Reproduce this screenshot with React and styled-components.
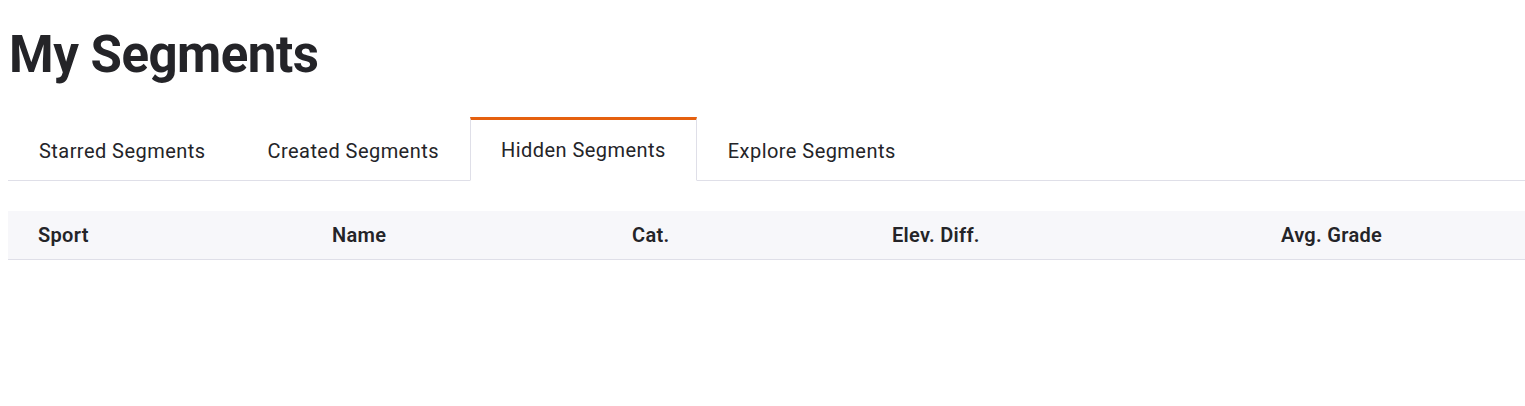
import React from "react"
import styled, { createGlobalStyle } from "styled-components"

const GlobalStyle = createGlobalStyle`
  body {
    margin: 0;
    background: #fff;
    font-family: Roboto, "Liberation Sans", sans-serif;
    color: #242428;
  }
`

const tabs = ["Starred Segments", "Created Segments", "Hidden Segments", "Explore Segments"]
const columns = [
  { label: "Sport", width: 294 },
  { label: "Name", width: 300 },
  { label: "Cat.", width: 260 },
  { label: "Elev. Diff.", width: 389 },
  { label: "Avg. Grade", width: 274 },
]

export default function App() {
  return (
    <Page>
      <GlobalStyle />
      <Title>My Segments</Title>
      <TabBar>
        {tabs.map((t) => (
          <Tab key={t} $active={t === "Hidden Segments"}>
            {t}
          </Tab>
        ))}
      </TabBar>
      <Table>
        <thead>
          <tr>
            {columns.map((c) => (
              <Th key={c.label} style={{ width: c.width }}>
                {c.label}
              </Th>
            ))}
          </tr>
        </thead>
      </Table>
    </Page>
  )
}

const Page = styled.div`
  display: flow-root;
  width: 1517px;
  padding: 25px 0 0 8px;
`

const Title = styled.h1`
  margin: 0 0 32px 1px;
  font-size: 51px;
  font-weight: 700;
  line-height: 60px;
  letter-spacing: -0.5px;
`

const TabBar = styled.ul`
  display: flex;
  list-style: none;
  margin: 0;
  padding: 0;
  height: 63px;
  border-bottom: 1px solid #dfdfe8;
`

const Tab = styled.li`
  display: flex;
  align-items: center;
  padding: 0 31px;
  font-size: 20px;
  letter-spacing: 0.45px;
  box-sizing: border-box;
  border-top: 3px solid transparent;
  margin-bottom: -1px;
  ${(p) =>
    p.$active &&
    `
    padding: 0 30px;
    border: 1px solid #dfdfe8;
    border-top: 3px solid #e5600f;
    border-bottom-color: #fff;
    background: #fff;
  `}
`

const Table = styled.table`
  margin-top: 30px;
  width: 100%;
  border-collapse: collapse;
  table-layout: fixed;
`

const Th = styled.th`
  height: 48px;
  padding: 0 30px;
  text-align: left;
  font-size: 20px;
  letter-spacing: 0.3px;
  font-weight: 600;
  background: #f7f7fa;
  border-bottom: 1px solid #dfdfe8;
  box-sizing: border-box;
`
